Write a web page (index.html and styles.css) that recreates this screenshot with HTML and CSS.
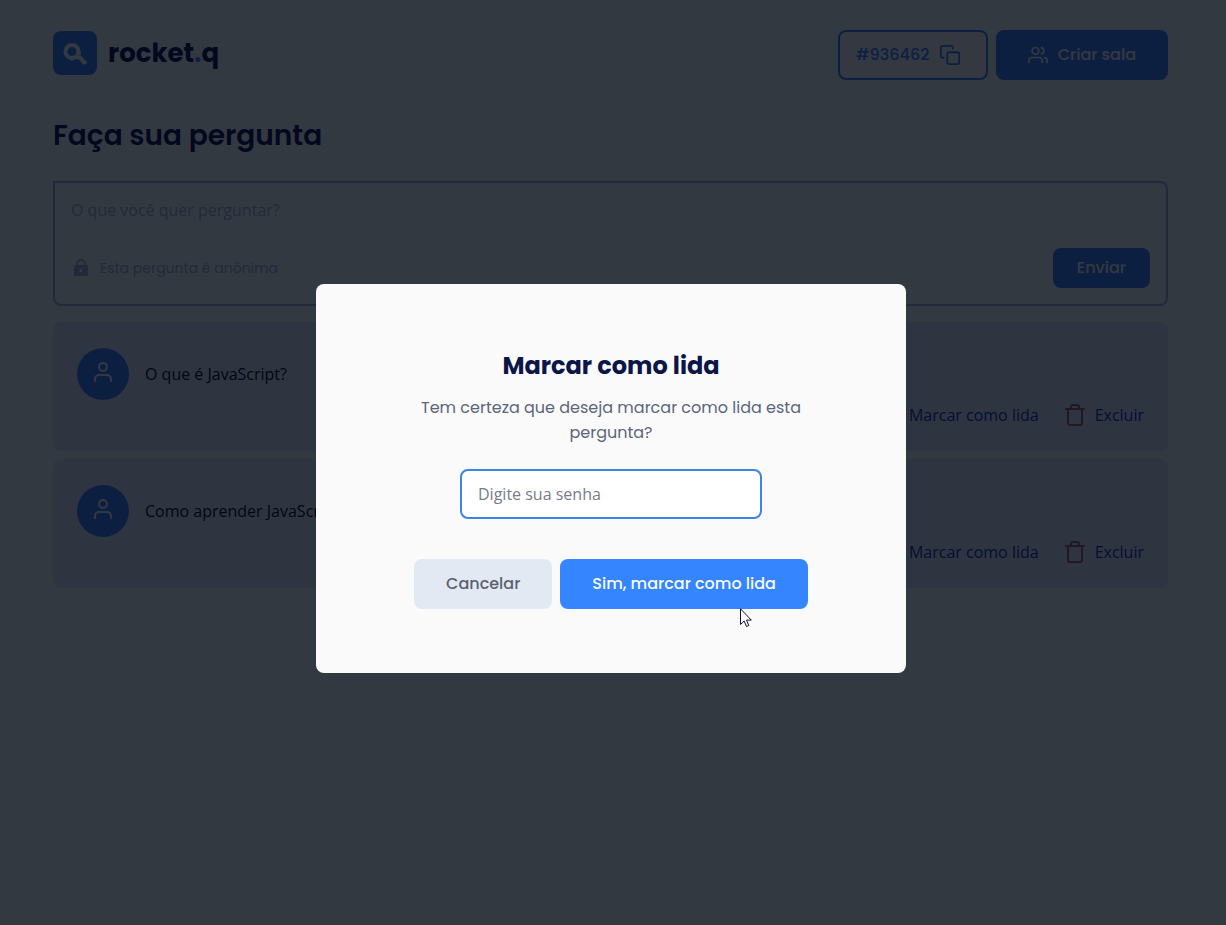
FILE: index.html
```html
<!DOCTYPE html>
<html lang="pt-BR">
<head>
<meta charset="utf-8">
<title>rocket.q</title>
<link rel="stylesheet" href="styles.css">
</head>
<body>
<svg class="sprite" aria-hidden="true">
  <symbol id="icon-user" viewBox="0 0 24 24"><path d="M20 21v-2a4 4 0 0 0-4-4H8a4 4 0 0 0-4 4v2"/><circle cx="12" cy="7" r="4"/></symbol>
  <symbol id="icon-trash" viewBox="0 0 24 24"><path d="M3 6h18M5 6v14a2 2 0 0 0 2 2h10a2 2 0 0 0 2-2V6M8 6V4a2 2 0 0 1 2-2h4a2 2 0 0 1 2 2v2"/></symbol>
  <symbol id="icon-check" viewBox="0 0 24 24"><path d="M20 6 9 17l-5-5"/></symbol>
</svg>
<div class="page">
  <header class="header">
    <a class="logo" href="#">
      <svg class="logo-mark" viewBox="0 0 44 44" aria-hidden="true">
        <rect class="logo-tile" width="44" height="44" rx="8"/>
        <circle class="logo-ring" cx="19" cy="20.500" r="6.500"/>
        <path class="logo-stub" d="M25.800 20.500v4.500"/>
        <path class="logo-gap" d="M22 24.300c2.500-.5 5 0 8 1.500"/>
        <path class="logo-tail" d="M19 27.500c3-1.500 6.500-1.800 8.500-.3 2 1.500 2.200 3.600 4.300 4.300"/>
      </svg>
      <span class="logo-name">rocket<span class="logo-dot">.</span>q</span>
    </a>
    <div class="header-actions">
      <button class="button room-code" type="button">#936462
        <svg class="icon" viewBox="0 0 24 24" aria-hidden="true"><rect x="9" y="9" width="13" height="13" rx="2"/><path d="M5 15H4a2 2 0 0 1-2-2V4a2 2 0 0 1 2-2h9a2 2 0 0 1 2 2v1"/></svg>
      </button>
      <button class="button primary create" type="button">
        <svg class="icon" viewBox="0 0 24 24" aria-hidden="true"><path d="M17 21v-2a4 4 0 0 0-4-4H5a4 4 0 0 0-4 4v2M23 21v-2a4 4 0 0 0-3-3.870M16 3.130a4 4 0 0 1 0 7.750"/><circle cx="9" cy="7" r="4"/></svg>
        Criar sala
      </button>
    </div>
  </header>
  <main class="content">
    <h1 class="page-title">Faça sua pergunta</h1>
    <form class="ask">
      <textarea class="ask-text" aria-label="Pergunta" placeholder="O que você quer perguntar?"></textarea>
      <div class="ask-footer">
        <span class="ask-note">
          <svg class="lock" viewBox="0 0 20 20" aria-hidden="true"><path fill-rule="evenodd" d="M5 7V6a5 5 0 0 1 10 0v1h.500A1.500 1.500 0 0 1 17 8.500v8a1.500 1.500 0 0 1-1.500 1.500h-11A1.500 1.500 0 0 1 3 16.500v-8A1.500 1.500 0 0 1 4.500 7zm2 0h6V6a3 3 0 0 0-6 0zm3 3.800a1.700 1.700 0 1 0 0 3.400 1.700 1.700 0 0 0 0-3.400z"/></svg>
          Esta pergunta é anônima
        </span>
        <button class="button primary send" type="button">Enviar</button>
      </div>
    </form>
    <section class="questions" aria-label="Perguntas">
      <article class="question">
        <div class="question-body">
          <span class="avatar"><svg class="icon" aria-hidden="true"><use href="#icon-user"/></svg></span>
          <p class="question-text">O que é JavaScript?</p>
        </div>
        <div class="question-actions">
          <a class="action" href="#"><svg class="icon" aria-hidden="true"><use href="#icon-check"/></svg>Marcar como lida</a>
          <a class="action delete" href="#"><svg class="icon" aria-hidden="true"><use href="#icon-trash"/></svg>Excluir</a>
        </div>
      </article>
      <article class="question">
        <div class="question-body">
          <span class="avatar"><svg class="icon" aria-hidden="true"><use href="#icon-user"/></svg></span>
          <p class="question-text">Como aprender JavaScript?</p>
        </div>
        <div class="question-actions">
          <a class="action" href="#"><svg class="icon" aria-hidden="true"><use href="#icon-check"/></svg>Marcar como lida</a>
          <a class="action delete" href="#"><svg class="icon" aria-hidden="true"><use href="#icon-trash"/></svg>Excluir</a>
        </div>
      </article>
    </section>
  </main>
</div>
<div class="overlay">
  <form class="modal" role="dialog" aria-labelledby="modal-title">
    <h2 class="modal-title" id="modal-title">Marcar como lida</h2>
    <p class="modal-text">Tem certeza que deseja marcar como lida esta pergunta?</p>
    <input class="password" type="password" aria-label="Senha" placeholder="Digite sua senha">
    <div class="modal-actions">
      <button class="button cancel" type="button">Cancelar</button>
      <span class="confirm-wrap">
        <button class="button confirm" type="button">Sim, marcar como lida</button>
        <svg class="pointer" viewBox="0 0 12 20" aria-hidden="true"><path d="M.5.800v15.700l3.600-3.500 2.400 5.500 2.300-1-2.300-5.400h4.800z"/></svg>
      </span>
    </div>
  </form>
</div>
</body>
</html>
```

FILE: styles.css
```css
:root {
  --blue: #3c78f8;
  --bright-blue: #3485ff;
  --navy: #0c0850;
  --ink-blue: #1428b4;
  --paper: #fafafa;
  --title-font: Poppins, Inter, sans-serif;
  --body-font: "Open Sans", sans-serif;
}
* { box-sizing: border-box; }
body {
  margin: 0;
  background: var(--paper);
  font: 16px/22px var(--body-font);
}
.sprite { display: none; }
h1, h2, p { margin: 0; }
.icon {
  width: 24px;
  height: 24px;
  flex: none;
  fill: none;
  stroke: currentColor;
  stroke-width: 2;
  stroke-linecap: round;
  stroke-linejoin: round;
}
.page { padding: 30px 58px 30px 53px; }
.header {
  display: flex;
  justify-content: space-between;
  align-items: flex-start;
}
.logo {
  display: flex;
  align-items: center;
  gap: 11px;
  padding-top: 1px;
  color: var(--navy);
  text-decoration: none;
}
.logo-mark { width: 44px; height: 44px; }
.logo-tile { fill: var(--blue); }
.logo-ring { fill: none; stroke: var(--paper); stroke-width: 4; }
.logo-stub { fill: none; stroke: var(--paper); stroke-width: 4; }
.logo-gap { fill: none; stroke: var(--blue); stroke-width: 1; }
.logo-tail { fill: none; stroke: var(--paper); stroke-width: 4; stroke-linecap: round; }
.logo-name { font: 700 26px/44px var(--title-font); }
.logo-dot { color: var(--blue); }
.header-actions { display: flex; gap: 8px; }
.button {
  display: inline-flex;
  align-items: center;
  justify-content: center;
  gap: 10px;
  height: 50px;
  padding: 0 32px;
  border: 0;
  border-radius: 8px;
  font: 500 16px/24px var(--title-font);
  white-space: nowrap;
  cursor: pointer;
}
.primary { background: var(--blue); color: var(--paper); }
.confirm { background: var(--bright-blue); color: var(--paper); }
.room-code {
  min-width: 150px;
  justify-content: flex-start;
  padding: 0 16px;
  border: 2px solid var(--blue);
  background: #fff5fa;
  color: var(--blue);
}
.room-code .icon { width: 22px; height: 22px; }
.create .icon { width: 20px; height: 20px; }
.page-title {
  margin: 33px 0 23px;
  color: var(--navy);
  font: 600 28px/45px var(--title-font);
}
.ask {
  padding: 16px;
  border: 2px solid #aaa8d2;
  border-radius: 0 8px 8px 8px;
}
.ask-text {
  display: block;
  width: 100%;
  height: 49px;
  padding: 0;
  border: 0;
  outline: 0;
  resize: none;
  background: transparent;
  font: 16px/22px var(--body-font);
}
.ask-text::placeholder { color: #aaa8d2; }
.ask-footer { display: flex; align-items: center; justify-content: space-between; }
.ask-note {
  display: flex;
  align-items: center;
  gap: 9px;
  color: #aaa8d2;
  font: 400 14px/22px var(--title-font);
}
.lock { width: 20px; height: 20px; fill: currentColor; }
.send { height: 40px; padding: 0 24px; }
.questions { display: grid; gap: 8px; margin-top: 16px; }
.question {
  padding: 24px;
  border-radius: 8px;
  background: #e6e0f8;
}
.question-body { display: flex; align-items: center; gap: 16px; padding: 2px 0 3px; }
.avatar {
  display: grid;
  place-items: center;
  width: 52px;
  height: 52px;
  padding-bottom: 4px;
  border-radius: 50%;
  background: var(--blue);
  color: var(--paper);
}
.question-text { color: #000010; }
.question-actions { display: flex; justify-content: flex-end; gap: 24px; }
.action {
  display: flex;
  align-items: center;
  gap: 8px;
  height: 24px;
  color: var(--ink-blue);
  text-decoration: none;
}
.delete .icon { color: #b04c60; }
.overlay {
  position: fixed;
  inset: 0;
  display: grid;
  place-items: center;
  padding: 32px 4px 0 0;
  background: rgba(1, 9, 19, 0.8);
}
.modal {
  display: flex;
  flex-direction: column;
  align-items: center;
  width: 590px;
  max-width: 100%;
  padding: 64px;
  border-radius: 8px;
  background: var(--paper);
  text-align: center;
}
.modal-title {
  margin-bottom: 12px;
  color: #0a1647;
  font: 700 24px/35px var(--title-font);
}
.modal-text {
  max-width: 400px;
  margin-bottom: 24px;
  color: #5b667a;
  font: 400 16px/25px var(--title-font);
}
.password {
  width: 302px;
  max-width: 100%;
  height: 50px;
  margin-bottom: 40px;
  padding: 0 16px;
  border: 2px solid #3f83e6;
  border-radius: 8px;
  outline: 0;
  background: #fff;
  font: 16px/22px var(--body-font);
}
.password::placeholder { color: #757c8a; }
.modal-actions { display: flex; gap: 8px; }
.cancel { background: #e3e9f2; color: #59616f; }
.confirm-wrap { position: relative; display: flex; }
.pointer {
  position: absolute;
  top: 49px;
  right: 56px;
  width: 12px;
  height: 20px;
  fill: #fff;
  stroke: #10102a;
  stroke-width: 1;
}
```
